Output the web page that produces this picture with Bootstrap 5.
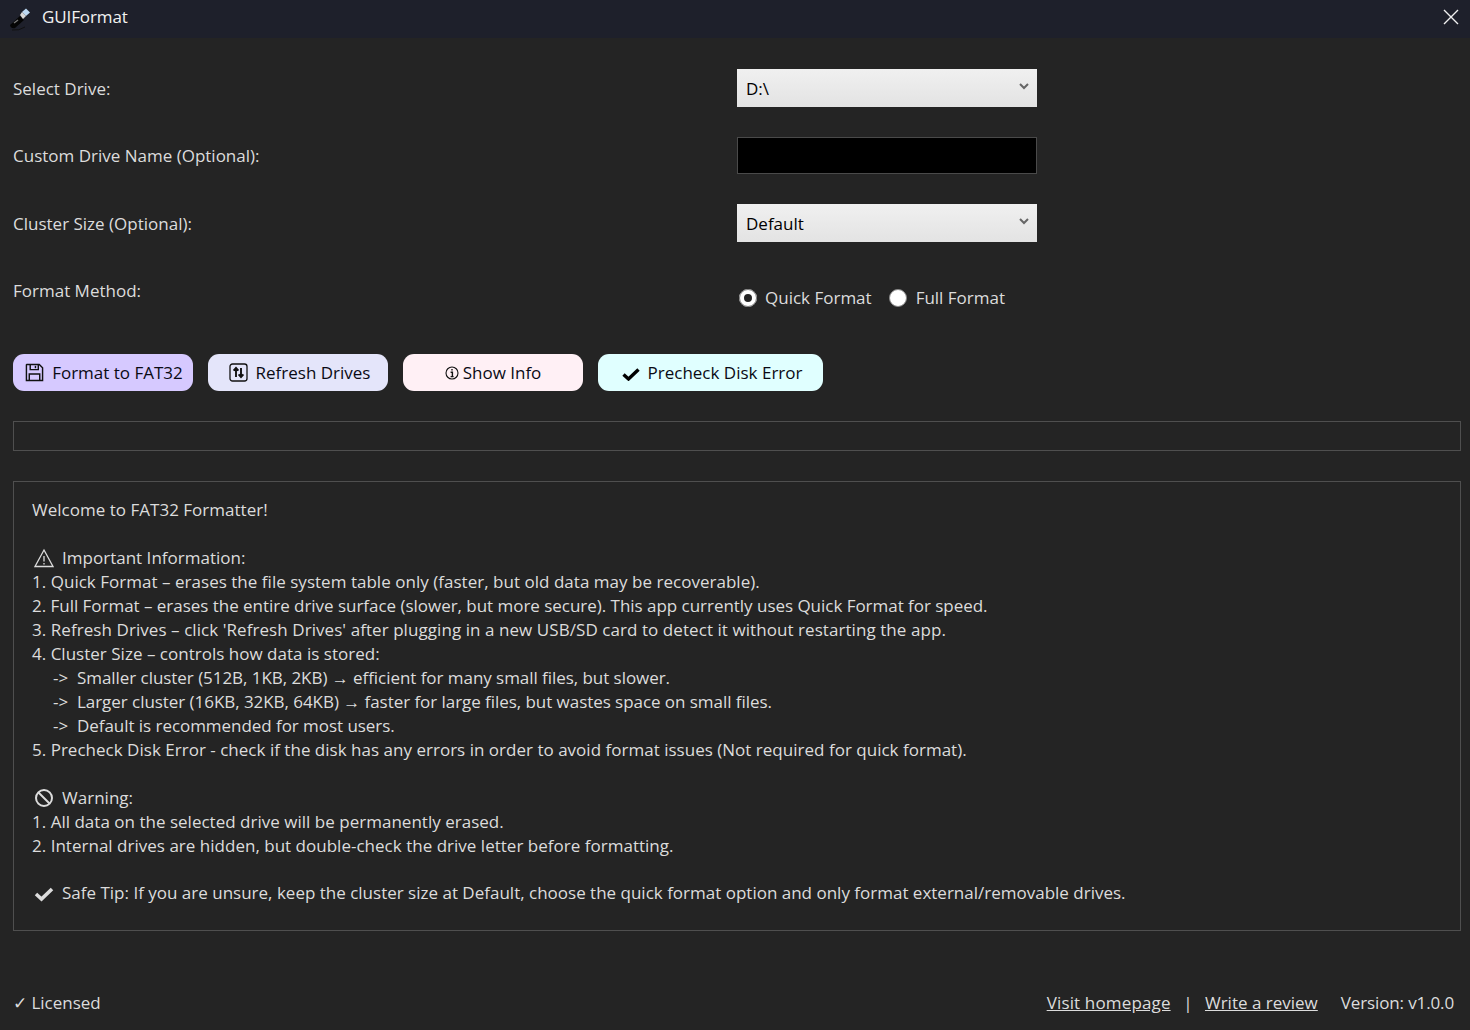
<!DOCTYPE html>
<html lang="en">
<head>
  <meta charset="UTF-8">
  <title>GUIFormat</title>
  <link href="https://cdn.jsdelivr.net/npm/bootstrap@5.3.3/dist/css/bootstrap.min.css" rel="stylesheet">
  <style>
    html, body { height: 100%; }
    body {
      background-color: #242424;
      color: #dcdcdc;
      font-family: "Open Sans", "Noto Sans", sans-serif;
      font-size: 17px;
      line-height: 24px;
      overflow: hidden;
    }
    .app-window { width: 1470px; height: 1030px; }
    .title-bar { height: 38px; background-color: #1e202b; color: #f2f2f2; padding: 0 9px; }
    .title-bar .app-name { margin-left: 11px; margin-top: -5px; letter-spacing: -0.1px; }
    .close-x { margin-left: auto; margin-top: -5px; margin-right: 2px; }
    .main-area { padding: 31px 9px 0 13px; }
    .form-line { margin-bottom: 30px; height: 38px; }
    .form-line.input-line { height: 37px; }
    .form-label-text { padding-top: 1px; }
    .drive-select {
      width: 300px; height: 38px; padding: 1px 9px 0; color: #000;
      background: linear-gradient(#f0f0f0, #e3e3e3);
    }
    .drive-select svg { margin-top: -4px; margin-right: -1px; }
    .name-input { width: 300px; height: 37px; background: #000; border: 1px solid #4a4a4a; border-radius: 0; display: block; }
    .radio-dot { width: 18px; height: 18px; border-radius: 50%; background: #fff; border: 1px solid #888; }
    .radio-dot.is-on { border: 5px solid #fff; background: #242424; outline: 1px solid #777; outline-offset: -1px; }
    .radio-dot.second-dot { margin-left: 17px; margin-right: 9px; }
    .radio-line { padding: 14px 0 0 2px; }
    .action-row { margin-top: 44px; gap: 15px; height: 37px; }
    .action-btn {
      height: 37px; width: 180px; padding: 0; border: 0; border-radius: 11px;
      color: #0a0a14; font-size: 17px; line-height: 24px;
    }
    .action-btn.nudge { padding-left: 3px; }
    .action-btn.wide { width: 225px; }
    .tone-violet, .tone-violet:hover { background: #d6c9ff; padding-left: 2px; }
    .tone-lavender, .tone-lavender:hover { background: #e4e5fa; }
    .tone-rose, .tone-rose:hover { background: #fff0f5; }
    .tone-cyan, .tone-cyan:hover { background: #e0ffff; }
    .check-mark { margin-top: 3px; }
    .progress-box { margin-top: 30px; height: 30px; border: 1px solid #4f4f4f; }
    .info-box { margin-top: 30px; height: 450px; border: 1px solid #4f4f4f; padding: 16px 18px 0; letter-spacing: 0.015px; }
    .info-box > div { white-space: pre; height: 24px; }
    .info-box > .fit-tight { letter-spacing: -0.03px; }
    .info-box > .fit-first { letter-spacing: 0.025px; }
    .info-box > .fit-wide { letter-spacing: 0.065px; }
    .info-box > .fit-tip { letter-spacing: 0; }
    .info-box .line-icon { display: inline-block; width: 20px; margin-left: 2px; margin-right: 8px; vertical-align: -4px; }
    .info-box > .blank-line.tall { height: 23px; }
    .info-box > .sub-line { padding-left: 21px; letter-spacing: -0.05px; }
    .arrow-mark { display: inline-block; width: 24px; }
    .foot-row { margin-top: 60px; padding-right: 7px; }
    .foot-row a { color: #dcdcdc; }
    .foot-home { letter-spacing: 0.15px; }
    .foot-sep { margin: 0 12.5px; }
    .foot-version { margin-left: 23px; letter-spacing: -0.13px; }
  </style>
</head>
<body>
  <div class="app-window d-flex flex-column">
    <div class="title-bar d-flex align-items-center">
      <svg width="22" height="24" viewBox="0 0 22 24" class="mt-n1">
        <path d="M1 18 L11 9 L15 13 L6 21 Q2 22 1 18Z" fill="#050505"/>
        <path d="M13 5 L17 1.5 L21 5.5 L17 9Z" fill="#bcd8f2"/>
        <path d="M11 8 L13 5 L17 9 L14 12Z" fill="#d8d8d8"/>
        <path d="M5 16 L9 13" stroke="#777" stroke-width="1.4"/>
        <path d="M3 23 Q10 24 16 20" stroke="#111" fill="none"/>
      </svg>
      <span class="app-name">GUIFormat</span>
      <svg class="close-x" width="16" height="16" viewBox="0 0 16 16"><path d="M1 1 L15 15 M15 1 L1 15" stroke="#f0f0f0" stroke-width="1.4"/></svg>
    </div>

    <div class="main-area">
      <div class="row g-0 form-line align-items-center">
        <div class="col-6 form-label-text">Select Drive:</div>
        <div class="col-6">
          <div class="drive-select d-flex align-items-center justify-content-between">
            <span>D:\</span>
            <svg width="10" height="7" viewBox="0 0 10 7"><path d="M1 1 L5 5 L9 1" stroke="#666" stroke-width="2" fill="none"/></svg>
          </div>
        </div>
      </div>
      <div class="row g-0 form-line input-line align-items-center">
        <div class="col-6 form-label-text">Custom Drive Name (Optional):</div>
        <div class="col-6"><input class="name-input" type="text" aria-label="Custom drive name"></div>
      </div>
      <div class="row g-0 form-line align-items-center">
        <div class="col-6 form-label-text">Cluster Size (Optional):</div>
        <div class="col-6">
          <div class="drive-select d-flex align-items-center justify-content-between">
            <span>Default</span>
            <svg width="10" height="7" viewBox="0 0 10 7"><path d="M1 1 L5 5 L9 1" stroke="#666" stroke-width="2" fill="none"/></svg>
          </div>
        </div>
      </div>
      <div class="row g-0 form-line">
        <div class="col-6 d-flex align-items-center">Format Method:</div>
        <div class="col-6">
          <div class="radio-line d-flex align-items-center">
            <span class="radio-dot is-on"></span><span class="ms-2">Quick Format</span>
            <span class="radio-dot second-dot"></span><span>Full Format</span>
          </div>
        </div>
      </div>

      <div class="action-row d-flex">
        <button class="btn action-btn tone-violet d-flex align-items-center justify-content-center gap-2" type="button">
          <svg width="19" height="19" viewBox="0 0 20 20" fill="none" stroke="#111" stroke-width="1.5"><path d="M2 1.5 H15 L18.5 5 V18.5 H1.5 V2Z"/><path d="M5.5 1.5 V7 H14 V1.5"/><path d="M11 3 V5.5"/><path d="M4.5 18.5 V11.5 H15.5 V18.5"/></svg>
          <span>Format to FAT32</span>
        </button>
        <button class="btn action-btn nudge tone-lavender d-flex align-items-center justify-content-center gap-2" type="button">
          <svg width="19" height="19" viewBox="0 0 19 19" fill="none" stroke="#111"><rect x="1" y="1" width="17" height="17" rx="2.5" stroke-width="1.3"/><path d="M7 14 V5.5 M4.6 7.6 L7 5 L9.4 7.6 M12 5 V13.5 M9.6 11.4 L12 14 L14.4 11.4" stroke-width="1.9"/></svg>
          <span>Refresh Drives</span>
        </button>
        <button class="btn action-btn tone-rose d-flex align-items-center justify-content-center gap-1" type="button">
          <svg width="14" height="14" viewBox="0 0 14 14" fill="none" stroke="#111"><circle cx="7" cy="7" r="6" stroke-width="1.1"/><path d="M7 3 V4.6 M5.6 6.2 H7.4 V10.6 M5.6 10.6 H8.6" stroke-width="1.4"/></svg>
          <span>Show Info</span>
        </button>
        <button class="btn action-btn wide nudge tone-cyan d-flex align-items-center justify-content-center gap-2" type="button">
          <svg class="check-mark" width="18" height="14" viewBox="0 0 18 14" fill="none" stroke="#000" stroke-width="3.4"><path d="M1.5 7.5 L6.5 12 L16.5 2.5"/></svg>
          <span>Precheck Disk Error</span>
        </button>
      </div>

      <div class="progress-box"></div>

      <div class="info-box">
        <div>Welcome to FAT32 Formatter!</div>
        <div class="blank-line"></div>
        <div><svg class="line-icon" width="20" height="20" viewBox="0 0 20 20" fill="none" stroke="#dcdcdc" stroke-width="1.3"><path d="M10 2 L19 18.5 H1Z"/><path d="M10 8 V13.5 M10 15 V16.5"/></svg>Important Information:</div>
        <div class="fit-first">1. Quick Format – erases the file system table only (faster, but old data may be recoverable).</div>
        <div class="fit-tight">2. Full Format – erases the entire drive surface (slower, but more secure). This app currently uses Quick Format for speed.</div>
        <div class="fit-wide">3. Refresh Drives – click 'Refresh Drives' after plugging in a new USB/SD card to detect it without restarting the app.</div>
        <div>4. Cluster Size – controls how data is stored:</div>
        <div class="sub-line"><span class="arrow-mark">-&gt;</span>Smaller cluster (512B, 1KB, 2KB) → efficient for many small files, but slower.</div>
        <div class="sub-line"><span class="arrow-mark">-&gt;</span>Larger cluster (16KB, 32KB, 64KB) → faster for large files, but wastes space on small files.</div>
        <div class="sub-line"><span class="arrow-mark">-&gt;</span>Default is recommended for most users.</div>
        <div>5. Precheck Disk Error - check if the disk has any errors in order to avoid format issues (Not required for quick format).</div>
        <div class="blank-line"></div>
        <div><svg class="line-icon" width="20" height="20" viewBox="0 0 20 20" fill="none" stroke="#dcdcdc" stroke-width="2"><circle cx="10" cy="10" r="8"/><path d="M4.5 4.5 L15.5 15.5"/></svg>Warning:</div>
        <div>1. All data on the selected drive will be permanently erased.</div>
        <div>2. Internal drives are hidden, but double-check the drive letter before formatting.</div>
        <div class="blank-line tall"></div>
        <div class="fit-tip"><svg class="line-icon" width="20" height="20" viewBox="0 0 20 20" fill="none" stroke="#dcdcdc" stroke-width="3.6"><path d="M2 11 L7.5 16 L18 6"/></svg>Safe Tip: If you are unsure, keep the cluster size at Default, choose the quick format option and only format external/removable drives.</div>
      </div>

      <div class="foot-row d-flex">
        <span>✓ Licensed</span>
        <a class="ms-auto foot-home" href="#">Visit homepage</a>
        <span class="foot-sep">|</span>
        <a href="#">Write a review</a>
        <span class="foot-version">Version: v1.0.0</span>
      </div>
    </div>
  </div>
  <script src="https://cdn.jsdelivr.net/npm/bootstrap@5.3.3/dist/js/bootstrap.bundle.min.js"></script>
</body>
</html>
